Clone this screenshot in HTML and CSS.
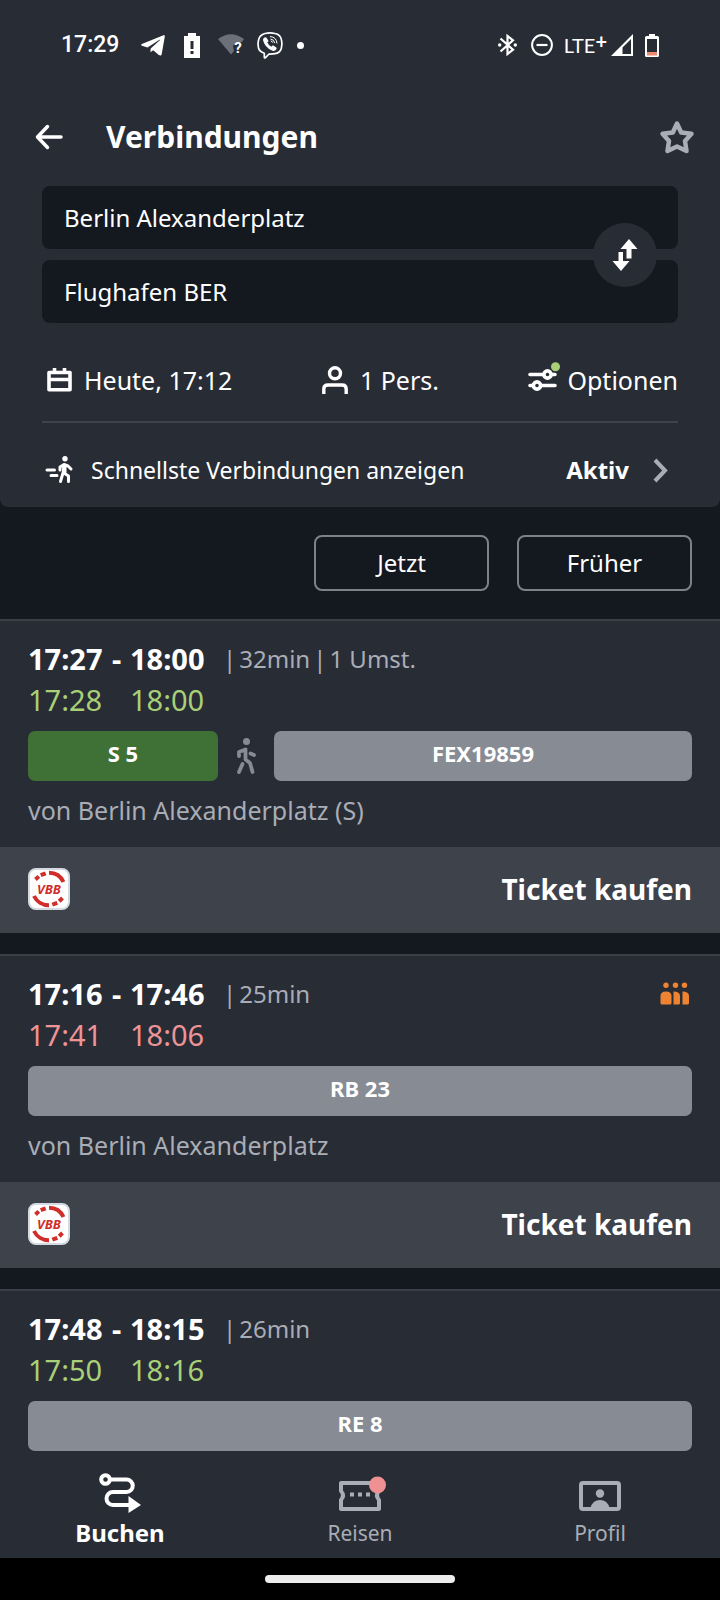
FILE: index.html
```html
<!DOCTYPE html>
<html lang="de">
<head>
<meta charset="utf-8">
<meta name="viewport" content="width=device-width, initial-scale=1">
<title>Verbindungen</title>
<link rel="stylesheet" href="styles.css">
</head>
<body>
<div class="app">
  <header class="search">
    <div class="status">
      <span class="clock">17:29</span>
      <svg class="s-telegram" width="24" height="21" viewBox="0 0 24 21"><path fill="#fff" d="M22.500.3L.8 9.100C-.2 9.600-.1 10.400.9 10.700L6.500 12.400L18.500 4.800C19 4.500 19.400 4.700 19.100 5L9.700 13.500L9.400 17.300L12.200 15.200L17.800 19.900C18.900 20.600 20.300 20.700 20.700 19.200L23.800 1.600C24 .4 23.500-.1 22.500.3Z"/></svg>
      <svg class="s-alert" width="16" height="25" viewBox="0 0 16 25"><path fill="#fff" d="M4 0H12V3H16V25H0V3H4Z"/><path stroke="#282c35" stroke-width="3" d="M8 8V16M8 18V21"/></svg>
      <svg class="s-wifi" width="26" height="22" viewBox="0 0 26 22"><path fill="#6c7078" d="M0 5Q13-4.500 26 5L24 8H18L15 12L16 17L13 20.500Z"/><text x="20" y="19" text-anchor="middle" class="wifi-mark">?</text></svg>
      <svg class="s-viber" width="26" height="27" viewBox="0 0 26 27"><path fill="none" stroke="#fff" stroke-width="1.700" stroke-linejoin="round" d="M8 1.500Q13 .3 18 1.500Q23.500 2.500 24.500 8Q25.500 12 24.300 16.500Q23 21 18 21.700Q15 22.200 12 22L8.300 25.800Q7.500 26.300 7.300 25.300V21.300Q2.500 19.700 1.500 16Q.5 12 1.500 8Q2.500 3 8 1.500Z"/><path fill="#fff" d="M8 5.200Q6 6 6 8Q7.500 15.500 15.500 18.800Q18 19.500 19.500 17Q20 16 19 15.300L16.300 13.600Q15.300 13.200 14.500 14.800Q11.500 13.500 10.300 10.300Q12 9.500 11.300 8.500L9.500 5.800Q9 5 8 5.200Z"/><path fill="none" stroke="#fff" d="M13 4.500Q19.500 5 20 11.500M13.500 7Q17.300 7.500 17.700 11M13.800 9Q15.500 9.300 15.700 10.700"/></svg>
      <span class="s-dot"></span>
      <svg class="s-bt" width="19" height="22" viewBox="0 0 19 22"><path fill="none" stroke="#fff" stroke-width="2.200" d="M2.500 4.500L15 15.700L9.500 20V2L15 6.300L2.500 17.500"/><circle cx="1.700" cy="11" r="1.700" fill="#fff"/><circle cx="17.300" cy="11" r="1.700" fill="#fff"/></svg>
      <svg class="s-dnd" width="22" height="22" viewBox="0 0 22 22"><circle cx="11" cy="11" r="9.900" fill="none" stroke="#fff" stroke-width="2"/><path stroke="#fff" stroke-width="2.200" d="M5.500 11H16.500"/></svg>
      <span class="lte">LTE<sup>+</sup></span>
      <svg class="s-signal" width="22" height="22" viewBox="0 0 22 22"><path fill="#fff" fill-rule="evenodd" d="M22 0V22H0ZM20 5L11.500 13.500V20H20Z"/></svg>
      <svg class="s-battery" width="14" height="23" viewBox="0 0 14 23"><path fill="#fff" fill-rule="evenodd" d="M4 0H10V2H12.500Q14 2 14 3.500V21.500Q14 23 12.500 23H1.500Q0 23 0 21.500V3.500Q0 2 1.500 2H4ZM2 5V21H12V5Z"/><path fill="#ec8b72" d="M2 18H12V21.500H2Z"/></svg>
    </div>

    <div class="titlebar">
      <button class="icon-btn" aria-label="Zurück"><svg width="28" height="26" viewBox="0 0 28 26"><path fill="none" stroke="#fff" stroke-width="3.500" stroke-linecap="round" stroke-linejoin="round" d="M12.500 2.500L2.500 13L12.500 23.500M3 13H26"/></svg></button>
      <h1>Verbindungen</h1>
      <button class="icon-btn" aria-label="Als Favorit merken"><svg width="34" height="33" viewBox="0 0 34 33"><path fill="none" stroke="#a9adb6" stroke-width="4.500" stroke-linejoin="round" d="M17 2.500L21.200 11.500L31.500 12.800L25 20L26.500 30L17 25.500L7.500 30L9 20L2.500 12.800L12.800 11.500Z"/></svg></button>
    </div>

    <div class="form">
      <div class="fields">
        <input type="text" aria-label="Start" value="Berlin Alexanderplatz">
        <input type="text" aria-label="Ziel" value="Flughafen BER">
        <button class="swap" aria-label="Start und Ziel tauschen"><svg width="26" height="32" viewBox="0 0 26 32"><path fill="#fff" d="M17 0L25.500 10H19.500V19.500H14.500V10H8.500ZM6.500 13H11V22H17.500L9 32L.5 22H6.500Z"/></svg></button>
      </div>
      <div class="criteria">
        <button class="crit"><svg width="25" height="25" viewBox="0 0 25 25"><path fill="none" stroke="#fff" stroke-width="3.600" stroke-linejoin="round" d="M2 5.500H23V22.800H2ZM2 12.500H23M7.500 1V5M17.500 1V5"/></svg>Heute, 17:12</button>
        <button class="crit"><svg width="26" height="28" viewBox="0 0 26 28"><circle cx="13" cy="7.300" r="5.500" fill="none" stroke="#fff" stroke-width="3.400"/><path fill="none" stroke="#fff" stroke-width="3.400" d="M1.800 28V23Q1.800 19 6 19H20Q24.200 19 24.200 23V28"/></svg>1 Pers.</button>
        <button class="crit options"><svg width="29" height="28" viewBox="0 0 29 28"><path stroke="#fff" stroke-width="3.600" stroke-linecap="round" d="M2 12.500H27M2 23.500H27"/><circle cx="19.500" cy="12.500" r="3.600" fill="#282c35" stroke="#fff" stroke-width="3.600"/><circle cx="9" cy="23.500" r="3.600" fill="#282c35" stroke="#fff" stroke-width="3.600"/><circle cx="27.500" cy="4.700" r="4.500" fill="#a9d077"/></svg>Optionen</button>
      </div>
      <button class="fastest">
        <svg width="28" height="28" viewBox="0 0 28 28"><g fill="none" stroke="#fff" stroke-width="3" stroke-linecap="round" stroke-linejoin="round"><path d="M2 14H9.500M6 19.500H12M15 14V11L19 8.500L23 10L26 13M19 9.500L18.300 16L15.500 25.500M19 17L23.500 20V25.500"/><path stroke-width="4" d="M19.500 10V16"/></g><circle cx="20" cy="2.800" r="2.700" fill="#fff"/></svg>
        <span class="fast-label">Schnellste Verbindungen anzeigen</span>
        <strong>Aktiv</strong>
        <svg class="chev" width="15" height="25" viewBox="0 0 15 25"><path fill="none" stroke="#a9adb6" stroke-width="4" d="M2 2L12 12.500L2 23"/></svg>
      </button>
    </div>
  </header>

  <main>
    <div class="jump"><button>Jetzt</button><button>Früher</button></div>

    <article class="trip">
      <div class="body">
        <div class="line"><div class="planned"><span>17:27</span><span>-</span><span>18:00</span></div><div class="meta"><span>|</span><span>32min</span><span>|</span><span>1 Umst.</span></div></div>
        <div class="actual ontime"><span>17:28</span><span>18:00</span></div>
        <div class="legs">
          <span class="leg sbahn">S 5</span>
          <svg width="20" height="36" viewBox="0 0 20 36"><circle cx="10.500" cy="3.500" r="3.500" fill="#878b93"/><path fill="none" stroke="#878b93" stroke-width="3.800" stroke-linecap="round" stroke-linejoin="round" d="M3 18V14L9.500 11.500V21.500L14 25L16.500 34M14.500 15.500L18 17M6.500 26L3 34"/></svg>
          <span class="leg long">FEX19859</span>
        </div>
        <p class="from">von Berlin Alexanderplatz (S)</p>
      </div>
      <div class="buy">
        <svg width="42" height="42" viewBox="0 0 42 42"><rect x="1" y="1" width="40" height="40" rx="7" fill="#fff" stroke="#d5dae2" stroke-width="2"/><path fill="none" stroke="#cf2e2b" stroke-width="4" d="M21 4.800A16.200 16.200 0 0 1 35.500 14M12.700 7.200L17.700 5.300M7.500 11.500L10.800 8.400M6 28A16.200 16.200 0 0 0 21 37.200M24.300 36.700L29.300 34.800M31.200 33.200L34.500 30"/><text x="21" y="26" text-anchor="middle" class="vbb-text">VBB</text></svg>
        <button>Ticket kaufen</button>
      </div>
    </article>

    <article class="trip">
      <div class="body">
        <div class="line"><div class="planned"><span>17:16</span><span>-</span><span>17:46</span></div><div class="meta"><span>|</span><span>25min</span></div>
          <svg class="load" role="img" aria-label="Hohe Auslastung" width="30" height="24" viewBox="0 0 30 24"><g fill="#ee8432"><circle cx="6" cy="3.200" r="2.700"/><circle cx="15.500" cy="3.200" r="2.700"/><circle cx="24.500" cy="3.200" r="2.700"/><path d="M.5 21V14Q.5 9.500 6 9.500T11.500 14V21Q11.500 22.500 10 22.500H2Q.5 22.500 .5 21ZM13.500 22.500V9.500Q20 9.500 20 14V21Q20 22.500 18.500 22.500ZM22.500 22.500V9.500Q29 9.500 29 14V21Q29 22.500 27.500 22.500Z"/></g></svg></div>
        <div class="actual late"><span>17:41</span><span>18:06</span></div>
        <div class="legs"><span class="leg long">RB 23</span></div>
        <p class="from">von Berlin Alexanderplatz</p>
      </div>
      <div class="buy">
        <svg width="42" height="42" viewBox="0 0 42 42"><rect x="1" y="1" width="40" height="40" rx="7" fill="#fff" stroke="#d5dae2" stroke-width="2"/><path fill="none" stroke="#cf2e2b" stroke-width="4" d="M21 4.800A16.200 16.200 0 0 1 35.500 14M12.700 7.200L17.700 5.300M7.500 11.500L10.800 8.400M6 28A16.200 16.200 0 0 0 21 37.200M24.300 36.700L29.300 34.800M31.200 33.200L34.500 30"/><text x="21" y="26" text-anchor="middle" class="vbb-text">VBB</text></svg>
        <button>Ticket kaufen</button>
      </div>
    </article>

    <article class="trip">
      <div class="body">
        <div class="line"><div class="planned"><span>17:48</span><span>-</span><span>18:15</span></div><div class="meta"><span>|</span><span>26min</span></div></div>
        <div class="actual ontime"><span>17:50</span><span>18:16</span></div>
        <div class="legs"><span class="leg long">RE 8</span></div>
      </div>
    </article>
  </main>

  <nav class="tabs">
    <a href="#buchen" class="active" aria-current="page"><svg width="42" height="40" viewBox="0 0 42 40"><circle cx="6.500" cy="6.500" r="4.300" fill="none" stroke="#fff" stroke-width="4"/><path fill="none" stroke="#fff" stroke-width="4" d="M11 6.500H27.500A6.200 6.200 0 0 1 27.500 19H14A6.400 6.400 0 0 0 14 32H31"/><path fill="#fff" d="M29.500 23L42 32L29.500 40Z"/></svg>Buchen</a>
    <a href="#reisen"><svg width="42" height="40" viewBox="0 0 42 40"><path fill="none" stroke="#a9adb6" stroke-width="4" stroke-linejoin="round" d="M2 10H40V18Q36 22.500 40 27V36H2V27Q6 22.500 2 18Z"/><path stroke="#a9adb6" stroke-width="4" stroke-dasharray="4 4" d="M11 21.500H33"/><circle cx="38.500" cy="12" r="8.500" fill="#ef9092"/></svg>Reisen</a>
    <a href="#profil"><svg width="42" height="40" viewBox="0 0 42 40"><rect x="2" y="10" width="38" height="26" rx="2" fill="none" stroke="#a9adb6" stroke-width="4"/><circle cx="21" cy="20.500" r="4.200" fill="#a9adb6"/><path fill="#a9adb6" d="M11.500 35Q13.500 27 21 27T30.500 35Z"/></svg>Profil</a>
  </nav>
  <div class="home"><span></span></div>
</div>
</body>
</html>
```

FILE: styles.css
```css
* { box-sizing: border-box; }

body {
  margin: 0;
  background: #14181f;
  color: #fff;
  font: 24px/32px "Noto Sans", "Open Sans", sans-serif;
}

button, input {
  margin: 0;
  padding: 0;
  border: 0;
  background: none;
  color: inherit;
  font: inherit;
}

svg { flex: none; display: block; overflow: visible; }

.app {
  display: flex;
  flex-direction: column;
  min-height: 100vh;
}

.search {
  background: #282c35;
  border-radius: 0 0 8px 8px;
}

.status {
  display: flex;
  align-items: center;
  height: 90px;
  padding: 0 61px;
}
.clock { font: 500 23px/28px Roboto, sans-serif; }
.s-telegram { margin-left: 22px; }
.s-alert { margin-left: 19px; }
.s-wifi { margin-left: 18px; }
.s-viber { margin-left: 13px; }
.s-dot { width: 7px; height: 7px; margin-left: 14px; border-radius: 50%; background: #fff; }
.s-bt { margin-left: auto; }
.s-dnd { margin-left: 14px; }
.lte { display: flex; margin-left: 11px; font: 20px/28px Lato, sans-serif; }
.lte sup { font-size: 20px; line-height: 20px; font-weight: 700; }
.s-signal { margin-left: 4px; }
.s-battery { margin-left: 12px; }
.wifi-mark { font: 700 15px Roboto, sans-serif; fill: #fff; }

.titlebar {
  display: flex;
  align-items: center;
  height: 96px;
  padding: 0 26px 2px 35px;
}
.titlebar h1 {
  flex: 1;
  margin: 0 0 0 43px;
  font-size: 30px;
  line-height: 40px;
  font-weight: 700;
}

.form { padding: 0 42px; }

.fields {
  position: relative;
  display: grid;
  gap: 11px;
}
.fields input {
  width: 100%;
  height: 63px;
  padding: 0 22px;
  border-radius: 8px;
  background: #14181f;
}
.swap {
  position: absolute;
  top: 50%;
  right: 21px;
  width: 64px;
  height: 64px;
  margin-top: -32px;
  border-radius: 50%;
  background: #282c35;
  display: grid;
  place-items: center;
}

.criteria {
  display: flex;
  justify-content: space-between;
  align-items: center;
  height: 100px;
  padding: 15px 0 0 5px;
  border-bottom: 2px solid #3e424b;
  font-size: 25px;
}
.crit { display: flex; align-items: center; gap: 12px; }
.options { gap: 10px; }
.options svg { margin-bottom: 8px; }

.fastest {
  display: flex;
  align-items: center;
  width: 100%;
  height: 84px;
  padding: 10px 10px 0 3px;
  text-align: left;
}
.fast-label { flex: 1; margin-left: 18px; font-size: 23px; }
.chev { margin-left: 24px; }

main {
  flex: 1;
  display: flex;
  flex-direction: column;
}

.jump {
  display: flex;
  justify-content: flex-end;
  gap: 28px;
  padding: 28px;
}
.jump button {
  width: 175px;
  height: 56px;
  border: 2px solid #7d8189;
  border-radius: 8px;
}

.trip {
  margin-bottom: 21px;
  border-top: 2px solid #3a3e46;
  background: #282c35;
}
.trip:last-child { flex: 1; margin-bottom: 0; }
.body { padding: 18px 28px 0; }

.line { display: flex; align-items: center; height: 40px; }
.planned {
  display: grid;
  grid-template-columns: 84px 18px 80px;
  font-size: 29px;
  line-height: 40px;
  font-weight: 700;
}
.meta {
  display: flex;
  gap: 3px;
  margin-left: 13px;
  color: #a9adb6;
}
.load { margin-left: auto; margin-right: 2px; }

.actual {
  display: grid;
  grid-template-columns: 102px 80px;
  height: 52px;
  font-size: 29px;
  line-height: 42px;
}
.ontime { color: #a9d077; }
.late { color: #ee9496; }

.legs { display: flex; align-items: center; gap: 18px; }
.leg {
  flex: 1;
  height: 50px;
  border-radius: 7px;
  background: #878b93;
  font-size: 22px;
  line-height: 45px;
  font-weight: 700;
  text-align: center;
}
.sbahn { flex: 0 0 190px; background: #3f7136; }

.from {
  margin: 0;
  padding: 13px 0 21px;
  color: #a9adb6;
  font-size: 25px;
}

.buy {
  display: flex;
  align-items: center;
  justify-content: space-between;
  height: 86px;
  padding: 0 28px 2px;
  background: #3e424a;
}
.buy button { font-size: 28px; line-height: 40px; font-weight: 700; }
.vbb-text { font: italic 700 13px "Noto Sans", sans-serif; fill: #cf2e2b; }

.tabs {
  display: grid;
  grid-template-columns: repeat(3, 1fr);
  padding: 21px 0 9px;
  background: #282c35;
}
.tabs a {
  display: flex;
  flex-direction: column;
  align-items: center;
  gap: 4px;
  color: #a9adb6;
  font-size: 21px;
  text-decoration: none;
}
.tabs .active { color: #fff; font-size: 24px; font-weight: 700; }

.home {
  display: grid;
  place-items: center;
  height: 42px;
  background: #000;
}
.home span { width: 190px; height: 8px; border-radius: 4px; background: #ececec; }
```
